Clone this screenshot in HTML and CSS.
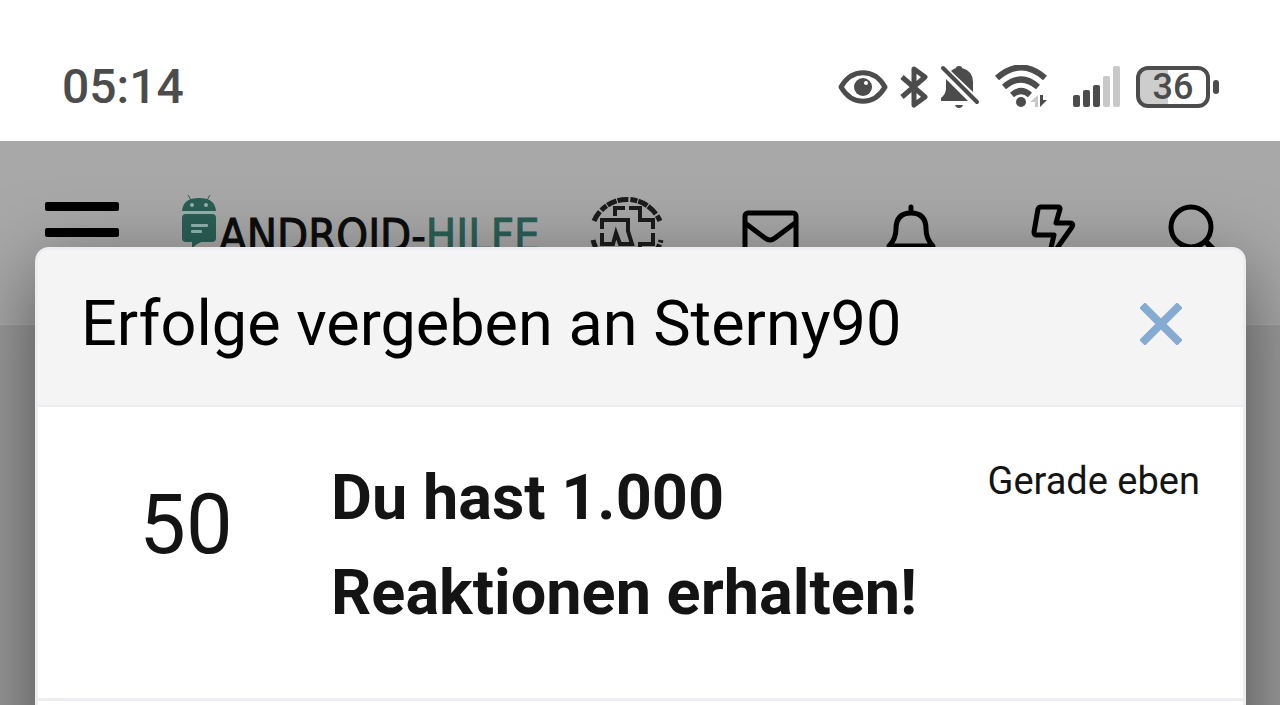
FILE: index.html
```html
<!DOCTYPE html>
<html lang="de">
<head>
  <meta charset="UTF-8"/>
  <meta name="viewport" content="width=device-width,initial-scale=1.0"/>
  <title>Android-Hilfe</title>
  <link rel="stylesheet" href="styles.css">
</head>
<body>
  <div class="status-bar">
    <span class="clock">05:14</span>
    <div class="status-icons">
      <svg width="50" height="34" viewBox="0 0 50 34">
        <path d="M3 17C14-2 36-2 47 17C36 36 14 36 3 17Z" fill="none" stroke="currentColor" stroke-width="5" stroke-linejoin="round"/>
        <circle cx="25" cy="17" r="9" fill="currentColor"/>
        <circle cx="28" cy="13" r="2" fill="#fff"/>
      </svg>
      <svg width="28" height="42" viewBox="0 0 28 42">
        <path d="M2 11L25 31L14 39V3L25 11L2 31" fill="none" stroke="currentColor" stroke-width="5" stroke-linejoin="round"/>
      </svg>
      <svg width="42" height="44" viewBox="0 0 42 44">
        <path d="M6 14L28 36H1V33Q6 29 6 23ZM11 6Q13 4 16 3Q16 1 19 1Q22 1 22 3Q33 6 33 17V27Z" fill="currentColor"/>
        <path d="M15 40H23Q22 43 19 43Q16 43 15 40Z" fill="currentColor"/>
        <path d="M3 3L37 37" stroke="currentColor" stroke-width="4" stroke-linecap="round"/>
      </svg>
      <svg width="54" height="44" viewBox="0 0 54 44">
        <g fill="none" stroke="currentColor" stroke-width="6">
          <path d="M3 13Q27-8 51 13"/>
          <path d="M10 22Q27 7 44 22"/>
          <path d="M18 30Q27 22 36 30"/>
        </g>
        <circle cx="27" cy="37" r="5" fill="currentColor"/>
        <path d="M44 30V42H41V37H36Z" fill="#c8c8c8"/>
        <path d="M46 30H49V35H53L46 42Z" fill="currentColor"/>
      </svg>
      <svg class="signal" width="48" height="42" viewBox="0 0 48 42">
        <g fill="currentColor">
          <rect x="1" y="29" width="7" height="12" rx="2"/>
          <rect x="11" y="24" width="7" height="17" rx="2"/>
          <rect x="21" y="19" width="7" height="22" rx="2"/>
        </g>
        <g fill="#c8c8c8">
          <rect x="31" y="10" width="7" height="31" rx="2"/>
          <rect x="41" y="0" width="7" height="41" rx="2"/>
        </g>
      </svg>
      <div class="battery"><span>36</span></div>
    </div>
  </div>

  <div class="site">
    <header class="site-header">
      <button class="menu-btn" aria-label="Menü"><i></i><i></i><i></i></button>
      <a class="logo" href="#">
        <svg width="36" height="78" viewBox="0 0 36 78">
          <g fill="#2a5f56">
            <path d="M1 17Q2 4 18 4Q34 4 35 17Z"/>
            <rect x="1" y="20" width="34" height="28" rx="4"/>
            <path d="M11 46V55Q15 49 24 47Z"/>
          </g>
          <path d="M10 6L7 1M26 6L29 1" stroke="#2a5f56" stroke-width="1"/>
          <g fill="#93b3ad">
            <rect x="1" y="17" width="34" height="3"/>
            <circle cx="11" cy="11" r="2"/>
            <circle cx="25" cy="11" r="2"/>
            <rect x="10" y="30" width="17" height="3" rx="1"/>
            <rect x="10" y="36" width="11" height="3" rx="1"/>
          </g>
        </svg>
        <span class="logo-text">ANDROID-<span class="logo-accent">HILFE</span></span>
      </a>
      <nav class="site-nav">
        <a href="#" aria-label="Profil">
          <svg class="avatar" width="72" height="76" viewBox="3 0 72 76" fill="none" stroke="#1c1c1c" stroke-width="4">
            <path d="M3 26A36 36 0 0 1 69 26" stroke-width="5" stroke-dasharray="11 2 7 1 10 1"/>
            <path d="M2 45A35 35 0 0 0 70 45" stroke-width="5" stroke-dasharray="8 2"/>
            <path d="M24 21V13H34M38 13H49V25H62V34M62 38V49H49V56M11 34V25H37V36L41 49H29L25 38L22 49H11V38"/>
          </svg>
        </a>
        <a href="#" aria-label="Nachrichten">
          <svg width="72" height="76" viewBox="0 0 72 76" fill="none" stroke="#000" stroke-width="5">
            <rect x="11" y="18" width="51" height="42" rx="3"/>
            <path d="M11 28L31 43Q36 47 41 43L61 28"/>
          </svg>
        </a>
        <a href="#" aria-label="Hinweise">
          <svg width="72" height="76" viewBox="0 0 72 76" fill="none" stroke="#000" stroke-width="5" stroke-linejoin="round" stroke-linecap="round">
            <path d="M36 12V17M14 51Q21 44 21 34Q21 18 36 18Q51 18 51 34Q51 44 58 51Z"/>
            <path d="M29 60Q36 66 43 60"/>
          </svg>
        </a>
        <a href="#" aria-label="Neue Beiträge">
          <svg width="72" height="76" viewBox="0 0 72 76" fill="none" stroke="#000" stroke-width="5" stroke-linejoin="round">
            <path d="M25 12H42Q44 12 44 14L40 28H54Q58 28 56 32L32 66L38 40H21Q18 40 18 37L22 14Q23 12 25 12Z"/>
          </svg>
        </a>
        <a href="#" aria-label="Suche">
          <svg width="72" height="76" viewBox="0 0 72 76" fill="none" stroke="#000" stroke-width="5">
            <circle cx="34" cy="32" r="20"/>
            <path d="M48 46L62 60" stroke-width="6"/>
          </svg>
        </a>
      </nav>
    </header>

    <section class="overlay" role="dialog" aria-labelledby="overlayTitle">
      <div class="overlay-head">
        <h1 id="overlayTitle">Erfolge vergeben an Sterny90</h1>
        <button class="close-btn" aria-label="Schließen">
          <svg width="42" height="42" viewBox="0 0 42 42">
            <path d="M5 5L37 37M37 5L5 37" stroke="currentColor" stroke-width="8" stroke-linecap="square"/>
          </svg>
        </button>
      </div>
      <div class="trophy">
        <span class="points">50</span>
        <h2>Du hast 1.000 Reaktionen erhalten!</h2>
        <time>Gerade eben</time>
      </div>
    </section>
  </div>
</body>
</html>
```
FILE: styles.css
```css
* { box-sizing:border-box; margin:0; padding:0; }
body {
  background:#fff; color:#141414;
  font-family: Roboto,"Liberation Sans",sans-serif;
  display:flex; flex-direction:column;
  height:100vh; overflow:hidden;
}
svg { display:block; flex:none; }
button { border:none; background:none; cursor:pointer; }

/* Phone status bar */
.status-bar {
  display:flex; align-items:center; justify-content:space-between;
  padding:56px 61px 23px 62px;
  color:#4c4c4c;
}
.clock { font-size:48px; font-weight:500; line-height:62px; }
.status-icons { display:flex; align-items:center; gap:12px; }
.signal { margin:0 4px 0 12px; }
.battery {
  position:relative;
  width:74px; height:42px; margin-right:9px;
  border:4px solid #4c4c4c; border-radius:12px;
  background:linear-gradient(90deg,#cdcdcd 42%,#fff 42%);
  font-size:36px; font-weight:500; line-height:34px; text-align:center;
}
.battery::after {
  content:""; position:absolute; right:-13px; top:10px;
  width:6px; height:14px; border-radius:3px;
  background:#4c4c4c;
}

/* Dimmed page */
.site {
  position:relative; flex:1; overflow:hidden;
  background:#9b9b9b;
}
.site-header {
  display:flex; align-items:center;
  height:184px; padding:0 51px 0 45px;
  background:#a8a8a8;
  border-bottom:1px solid #adadad;
}
.menu-btn { display:flex; flex-direction:column; gap:17px; width:74px; }
.menu-btn i { height:9px; border-radius:2px; background:#000; }
.logo {
  display:flex; align-items:center; gap:2px;
  margin-left:62px;
  color:#0d0d0d; text-decoration:none;
}
.logo-text {
  padding-top:7px;
  font-family:"DejaVu Sans Condensed","DejaVu Sans",sans-serif;
  font-size:45px; line-height:54px;
  -webkit-text-stroke:1px currentColor;
}
.logo-accent { color:#2a5f56; }
.site-nav {
  flex:1; display:flex; justify-content:space-between;
  margin-left:54px;
}
.avatar { overflow:visible; }

/* Overlay */
.overlay {
  position:absolute; top:106px; left:35px; right:34px; bottom:-200px;
  border:3px solid #edeef2; border-radius:14px;
  background:#fff; overflow:hidden;
  box-shadow:0 24px 80px rgba(0,0,0,.5);
}
.overlay-head {
  display:flex; align-items:center; justify-content:space-between;
  padding:27px 61px 35px 43px;
  background:#f4f4f4; border-bottom:2px solid #ebecee;
}
.overlay-head h1 { font-size:63px; font-weight:400; line-height:93px; color:#000; }
.close-btn { color:#86abd3; }
.trophy {
  display:grid; grid-template-columns:206px 1fr auto; column-gap:42px;
  padding:43px 43px 58px 45px;
  border-bottom:3px solid #edeef2;
}
.points { font-size:83px; line-height:150px; text-align:center; }
.trophy h2 { font-size:63px; font-weight:700; line-height:95px; }
.trophy time { font-size:38px; line-height:62px; }
```
